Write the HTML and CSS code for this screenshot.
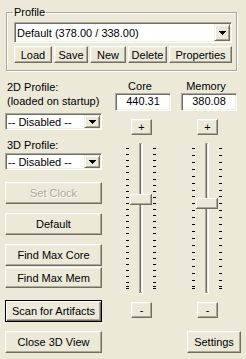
FILE: index.html
```html
<!DOCTYPE html>
<html lang="en">
<head>
    <meta charset="UTF-8">
    <meta name="viewport" content="width=device-width, initial-scale=1.0">
    <title>Overclocking</title>
    <link rel="stylesheet" href="styles.css">
</head>
<body>

    <!-- Perfiles guardados -->
    <fieldset class="profile">
        <legend>Profile</legend>
        <div class="combo combo-wide">
            <span class="combo-text">Default (378.00 / 338.00)</span>
            <span class="combo-btn"><svg width="7" height="4"><path d="M0 0h7v1h-1v1h-1v1h-1v1h-1v-1h-1v-1h-1v-1h-1z"/></svg></span>
        </div>
        <div class="profile-buttons">
            <button class="btn btn-load">Load</button>
            <button class="btn btn-save">Save</button>
            <button class="btn btn-new">New</button>
            <button class="btn btn-delete">Delete</button>
            <button class="btn btn-props">Properties</button>
        </div>
    </fieldset>

    <div class="main">
        <div class="left">
            <div class="label">2D Profile:<br>(loaded on startup)</div>
            <div class="combo combo-small">
                <span class="combo-text">-- Disabled --</span>
                <span class="combo-btn"><svg width="7" height="4"><path d="M0 0h7v1h-1v1h-1v1h-1v1h-1v-1h-1v-1h-1v-1h-1z"/></svg></span>
            </div>
            <div class="label label-3d">3D Profile:</div>
            <div class="combo combo-small combo-3d">
                <span class="combo-text">-- Disabled --</span>
                <span class="combo-btn"><svg width="7" height="4"><path d="M0 0h7v1h-1v1h-1v1h-1v1h-1v-1h-1v-1h-1v-1h-1z"/></svg></span>
            </div>
            <button class="btn btn-wide btn-setclock" disabled>Set Clock</button>
            <button class="btn btn-wide btn-gap">Default</button>
            <button class="btn btn-wide btn-gap">Find Max Core</button>
            <button class="btn btn-wide btn-maxmem">Find Max Mem</button>
            <button class="btn btn-wide btn-default btn-scan">Scan for Artifacts</button>
            <button class="btn btn-wide btn-gap">Close 3D View</button>
        </div>

        <div class="right">
            <div class="sliders">
                <!-- Core -->
                <div class="clock">
                    <div class="clock-title">Core</div>
                    <div class="field">440.31</div>
                    <button class="btn btn-step">+</button>
                    <svg class="track" width="32" height="151" shape-rendering="crispEdges">
                        <rect x="15" y="0" width="4" height="151" fill="#fff"/>
                        <rect x="15" y="0" width="3" height="150" fill="#aca899"/>
                        <rect x="16" y="1" width="2" height="148" fill="#f1efe2"/>
                        <rect x="16" y="1" width="1" height="148" fill="#716f64"/>
                        <path stroke="#000" d="M2 5.5h3M29 5.5h3M2 11.5h3M29 11.5h3M2 17.5h3M29 17.5h3M2 23.5h3M29 23.5h3M2 29.5h3M29 29.5h3M2 36.5h3M29 36.5h3M2 42.5h3M29 42.5h3M2 48.5h3M29 48.5h3M2 54.5h3M29 54.5h3M2 60.5h3M29 60.5h3M2 66.5h3M29 66.5h3M2 72.5h3M29 72.5h3M2 78.5h3M29 78.5h3M2 84.5h3M29 84.5h3M2 90.5h3M29 90.5h3M2 97.5h3M29 97.5h3M2 103.5h3M29 103.5h3M2 109.5h3M29 109.5h3M2 115.5h3M29 115.5h3M2 121.5h3M29 121.5h3M2 127.5h3M29 127.5h3M2 133.5h3M29 133.5h3M2 139.5h3M29 139.5h3M2 143.5h3M29 143.5h3M2 145.5h3M29 145.5h3"/>
                        <rect x="6" y="51" width="22" height="11" fill="#716f64"/>
                        <rect x="6" y="51" width="21" height="10" fill="#fff"/>
                        <rect x="7" y="52" width="20" height="9" fill="#aca899"/>
                        <rect x="7" y="52" width="19" height="8" fill="#ece9d8"/>
                    </svg>
                    <button class="btn btn-step">-</button>
                </div>
                <!-- Memory -->
                <div class="clock">
                    <div class="clock-title">Memory</div>
                    <div class="field">380.08</div>
                    <button class="btn btn-step">+</button>
                    <svg class="track" width="32" height="151" shape-rendering="crispEdges">
                        <rect x="15" y="0" width="4" height="151" fill="#fff"/>
                        <rect x="15" y="0" width="3" height="150" fill="#aca899"/>
                        <rect x="16" y="1" width="2" height="148" fill="#f1efe2"/>
                        <rect x="16" y="1" width="1" height="148" fill="#716f64"/>
                        <path stroke="#000" d="M2 5.5h3M29 5.5h3M2 12.5h3M29 12.5h3M2 19.5h3M29 19.5h3M2 26.5h3M29 26.5h3M2 33.5h3M29 33.5h3M2 40.5h3M29 40.5h3M2 47.5h3M29 47.5h3M2 53.5h3M29 53.5h3M2 60.5h3M29 60.5h3M2 67.5h3M29 67.5h3M2 74.5h3M29 74.5h3M2 81.5h3M29 81.5h3M2 88.5h3M29 88.5h3M2 95.5h3M29 95.5h3M2 102.5h3M29 102.5h3M2 109.5h3M29 109.5h3M2 116.5h3M29 116.5h3M2 123.5h3M29 123.5h3M2 130.5h3M29 130.5h3M2 137.5h3M29 137.5h3M2 143.5h3M29 143.5h3M2 145.5h3M29 145.5h3"/>
                        <rect x="6" y="55" width="22" height="11" fill="#716f64"/>
                        <rect x="6" y="55" width="21" height="10" fill="#fff"/>
                        <rect x="7" y="56" width="20" height="9" fill="#aca899"/>
                        <rect x="7" y="56" width="19" height="8" fill="#ece9d8"/>
                    </svg>
                    <button class="btn btn-step">-</button>
                </div>
            </div>
            <div class="footer">
                <button class="btn btn-settings">Settings</button>
            </div>
        </div>
    </div>

</body>
</html>
```

FILE: styles.css
```css
/* Dialogo estilo Windows clasico */
html {
    background: #ece9d8;
}

body {
    margin: 0;
    width: 246px;
    height: 359px;
    overflow: hidden;
    background: #ece9d8;
    font-family: "Liberation Sans", Arial, sans-serif;
    font-size: 11px;
    color: #000;
}

/* Grupo de perfil */
.profile {
    box-sizing: border-box;
    width: 231px;
    margin: 6px 0 0 6px;
    padding: 3px 4px 7px 7px;
    min-width: 0;
    border: 1px solid #aca899;
    box-shadow: inset 1px 1px 0 #fff, 1px 1px 0 #fff;
}

.profile legend {
    padding: 0 1px;
    margin-left: -1px;
    line-height: 13px;
}

.profile-buttons {
    display: flex;
    gap: 2px;
    margin-top: 3px;
}

.profile-buttons .btn {
    height: 17px;
}

.btn-load { width: 38px; }
.btn-save { width: 34px; }
.btn-new { width: 36px; }
.btn-delete { width: 39px; }
.btn-props { width: 63px; }

/* Combos */
.combo {
    box-sizing: border-box;
    display: flex;
    align-items: stretch;
    padding: 1px;
    background: #fff;
    border: 1px solid;
    border-color: #aca899 #fff #fff #aca899;
    box-shadow: inset 1px 1px 0 #716f64, inset -1px -1px 0 #f1efe2;
}

.combo-wide {
    width: 218px;
    height: 21px;
}

.combo-small {
    width: 97px;
    height: 17px;
    margin-top: 5px;
}

.combo-3d {
    margin-top: 1px;
}

.combo-text {
    flex: 1;
    padding-left: 1px;
    align-self: center;
    white-space: nowrap;
    overflow: hidden;
}

.combo-btn {
    box-sizing: border-box;
    width: 16px;
    display: flex;
    align-items: center;
    justify-content: center;
    background: #ece9d8;
    border: 1px solid;
    border-color: #f1efe2 #716f64 #716f64 #f1efe2;
    box-shadow: inset 1px 1px 0 #fff, inset -1px -1px 0 #aca899;
}

.combo-btn svg {
    display: block;
}

/* Botones */
.btn {
    box-sizing: border-box;
    margin: 0;
    padding: 0;
    font: inherit;
    color: #000;
    background: #ece9d8;
    border: 1px solid;
    border-color: #fff #716f64 #716f64 #fff;
    box-shadow: inset -1px -1px 0 #aca899, inset 1px 1px 0 #f1efe2;
    white-space: nowrap;
}

.btn:disabled {
    color: #aca899;
    text-shadow: 1px 1px 0 #fff;
}

.btn-default {
    border-color: #000;
    box-shadow: inset 1px 1px 0 #fff, inset -1px -1px 0 #716f64, inset -2px -2px 0 #aca899;
}

/* Zona principal */
.main {
    display: flex;
}

.left {
    width: 97px;
    margin-left: 5px;
    display: flex;
    flex-direction: column;
}

.label {
    margin: 9px 0 0 2px;
    line-height: 14px;
    white-space: nowrap;
}

.label-3d {
    margin-top: 8px;
}

.btn-wide {
    width: 97px;
    height: 22px;
}

.btn-setclock {
    margin-top: 12px;
}

.btn-gap {
    margin-top: 9px;
}

.btn-maxmem {
    margin-top: 1px;
    height: 21px;
}

.btn-scan {
    margin-top: 12px;
}

.right {
    flex: 1;
    display: flex;
    flex-direction: column;
}

.sliders {
    display: flex;
    gap: 34px;
    margin: 9px 0 0 22px;
}

.clock {
    width: 32px;
    display: flex;
    flex-direction: column;
    align-items: center;
}

.clock-title {
    line-height: 13px;
    white-space: nowrap;
}

.field {
    box-sizing: border-box;
    width: 56px;
    height: 18px;
    margin-left: 6px;
    line-height: 14px;
    text-align: center;
    background: #fff;
    border: 1px solid;
    border-color: #aca899 #fff #fff #aca899;
    box-shadow: inset 1px 1px 0 #716f64, inset -1px -1px 0 #f1efe2;
}

.btn-step {
    width: 21px;
    height: 16px;
    margin: 8px 0 0 3px;
    line-height: 12px;
}

.track {
    display: block;
    margin-top: 8px;
}

.footer {
    display: flex;
    justify-content: flex-end;
    padding-right: 5px;
    margin-top: 13px;
}

.btn-settings {
    width: 54px;
    height: 22px;
}
```
